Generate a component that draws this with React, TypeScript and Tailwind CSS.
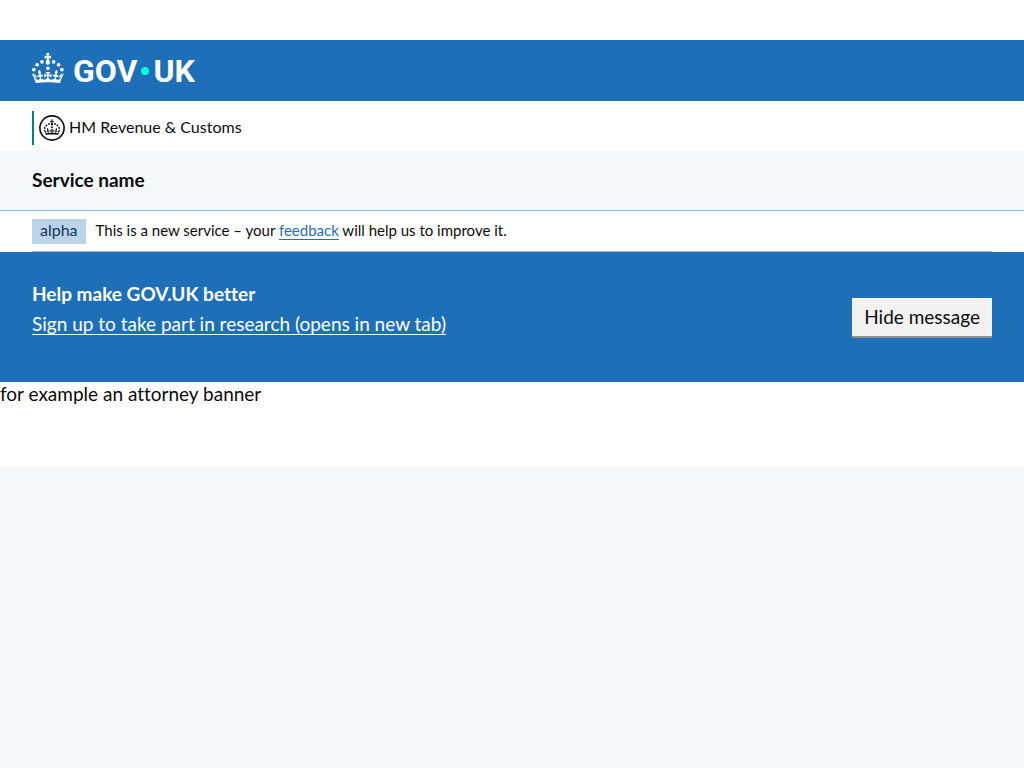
import { useState, type ReactNode } from "react";

function Crown() {
  return (
    <g fill="currentColor">
      <circle cx="20" cy="17.6" r="3.7" />
      <circle cx="10.2" cy="23.5" r="3.7" />
      <circle cx="3.7" cy="33.2" r="3.7" />
      <circle cx="31.7" cy="30.6" r="3.7" />
      <circle cx="43.3" cy="17.6" r="3.7" />
      <circle cx="53.2" cy="23.5" r="3.7" />
      <circle cx="59.7" cy="33.2" r="3.7" />
      <path d="M33.1,9.8c.2-.1.3-.3.5-.5l4.6,2.4v-6.8l-4.6,1.5c-.1-.2-.3-.3-.5-.5l1.9-5.9h-6.7l1.9,5.9c-.2.1-.3.3-.5.5l-4.6-1.5v6.8l4.6-2.4c.1.2.3.3.5.5l-2.6,8c-.9,2.8,1.2,5.7,4.1,5.7h0c3,0,5.1-2.9,4.1-5.7l-2.6-8ZM37,37.9s-3.4,3.8-4.1,6.1c2.2,0,4.2-.5,6.4-2.8l-.7,8.5c-2-2.8-4.4-4.1-5.7-3.8.1,3.1.5,6.7,5.8,7.2,3.7.3,6.7-1.5,7-3.8.4-2.6-2-4.3-3.7-1.6-1.4-4.5,2.4-6.1,4.9-3.2-1.9-4.5-1.8-7.7,2.4-10.9,3,4,2.6,7.3-1.2,11.1,2.4-1.3,6.2,0,4,4.6-1.2-2.8-3.7-2.2-4.2.2-.3,1.7.7,3.7,3,4.2,1.9.3,4.7-.9,7-5.9-1.3,0-2.4.7-3.9,1.7l2.4-8c.6,2.3,1.4,3.7,2.2,4.5.6-1.6.5-2.8,0-5.3l5,1.8c-2.6,3.6-5.2,8.7-7.3,17.5-7.4-1.1-15.7-1.7-24.5-1.7h0c-8.8,0-17.1.6-24.5,1.7-2.1-8.9-4.7-13.9-7.3-17.5l5-1.8c-.5,2.5-.6,3.7,0,5.3.8-.8,1.6-2.3,2.2-4.5l2.4,8c-1.5-1-2.6-1.7-3.9-1.7,2.3,5,5.2,6.2,7,5.9,2.3-.4,3.3-2.4,3-4.2-.5-2.4-3-3.1-4.2-.2-2.2-4.6,1.6-6,4-4.6-3.7-3.7-4.2-7.1-1.2-11.1,4.2,3.2,4.3,6.4,2.4,10.9,2.5-2.8,6.3-1.3,4.9,3.2-1.8-2.7-4.1-1-3.7,1.6.3,2.3,3.3,4.1,7,3.8,5.4-.5,5.7-4.2,5.8-7.2-1.3-.2-3.7,1-5.7,3.8l-.7-8.5c2.2,2.3,4.2,2.7,6.4,2.8-.7-2.3-4.1-6.1-4.1-6.1h10.6,0Z" />
    </g>
  );
}

function Container({ children }: { children: ReactNode }) {
  return <div className="mx-8 max-w-[960px] lg:mx-auto lg:w-[calc(100%-64px)]">{children}</div>;
}

function ResearchBanner({ onHide }: { onHide: () => void }) {
  return (
    <section className="bg-[#1d70b8] pt-[30px] pb-11 text-white">
      <Container>
        <div className="flex flex-wrap items-end justify-between gap-4">
          <div className="pb-[2px]">
            <h2 className="text-[19px] leading-6 font-bold">Help make GOV.UK better</h2>
            <a
              href="#research"
              className="mt-[6px] block text-[19px] leading-6 underline decoration-1 underline-offset-3"
            >
              Sign up to take part in research (opens in new tab)
            </a>
          </div>
          <button
            type="button"
            onClick={onHide}
            className="h-10 border-b-2 border-[#929191] bg-[#f3f2f1] px-3 pb-px text-[19px] leading-6 text-[#0b0c0c]"
          >
            Hide message
          </button>
        </div>
      </Container>
    </section>
  );
}

export default function App() {
  const [showResearch, setShowResearch] = useState(true);

  return (
    <div className="min-h-screen bg-[#f4f8fb] font-['Lato','Liberation_Sans',sans-serif] text-[#0b0c0c] [font-variant-ligatures:none]">
      <div className="bg-white pt-10 pb-[61px]">
        <header>
          <div className="bg-[#1d70b8] text-white">
            <Container>
              <a
                href="#home"
                aria-label="GOV.UK"
                className="inline-flex h-[61px] items-center font-['Roboto','Liberation_Sans',sans-serif] text-[32px] leading-[30px] font-bold"
              >
                <svg viewBox="0 0 64 60" className="mr-[9px] mb-[5px] h-[30px] w-8" aria-hidden="true">
                  <Crown />
                </svg>
                <span>GOV</span>
                <span className="mx-1 size-2 rounded-full bg-[#00ffe0]" />
                <span>UK</span>
              </a>
            </Container>
          </div>

          <div className="pt-[10px] pb-[6px]">
            <Container>
              <div className="flex h-[34px] items-center gap-1 border-l-2 border-[#008670] pl-[5px]">
                <svg viewBox="0 0 26 26" className="size-[26px]" aria-hidden="true">
                  <circle cx="13" cy="13" r="12.1" fill="none" stroke="currentColor" strokeWidth="1.6" />
                  <g transform="translate(4.8 4.4) scale(0.257)">
                    <Crown />
                  </g>
                </svg>
                <span className="pb-[2px] text-[16px] leading-5">HM Revenue &amp; Customs</span>
              </div>
            </Container>
          </div>

          <div className="border-b border-[#8eb8dc] bg-[#f4f8fb] pt-[17px] pb-[18px]">
            <Container>
              <a href="#service" className="block text-[19px] leading-6 font-bold">
                Service name
              </a>
            </Container>
          </div>
        </header>

        <Container>
          <div className="flex items-center border-b border-[#b1b4b6] pt-2 pb-[7px]">
            <strong className="mr-[10px] bg-[#bbd4ea] px-2 pt-px pb-1 text-[16px] leading-5 font-normal text-[#0f385c]">
              alpha
            </strong>
            <p className="pb-[3px] text-[15px] leading-5">
              This is a new service – your{" "}
              <a href="#feedback" className="text-[#1d70b8] underline decoration-1 underline-offset-3">
                feedback
              </a>{" "}
              will help us to improve it.
            </p>
          </div>
        </Container>

        {showResearch && <ResearchBanner onHide={() => setShowResearch(false)} />}

        <p className="text-[19px] leading-6">for example an attorney banner</p>
      </div>
    </div>
  );
}
